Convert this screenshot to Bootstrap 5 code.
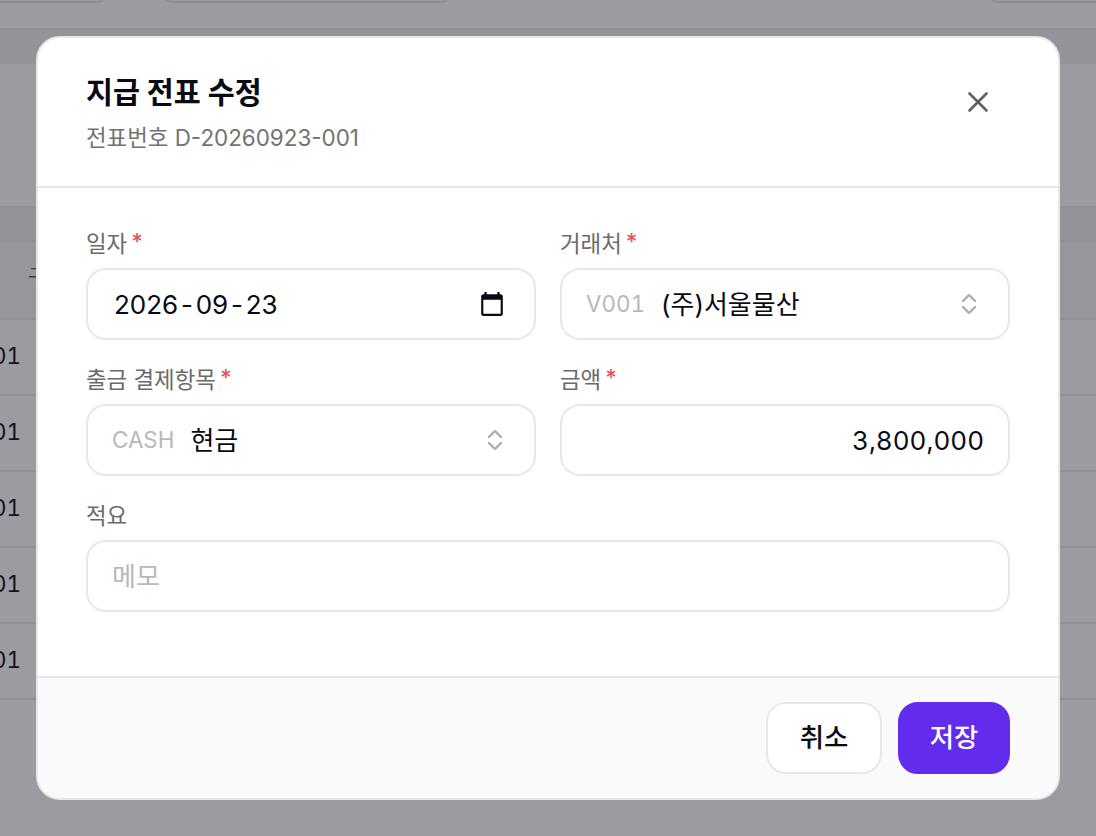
<!DOCTYPE html>
<html lang="ko">
<head>
<meta charset="utf-8">
<title>지급 전표 수정</title>
<link href="https://cdn.jsdelivr.net/npm/bootstrap@5.3.0/dist/css/bootstrap.min.css" rel="stylesheet">
<style>
html,body{height:100%;margin:0;overflow:hidden;}
body{font-family:Inter,"Noto Sans CJK KR",sans-serif;background:#9c9ba1;color:#0a0a14;}
.bg-layer{height:836px;overflow:hidden;display:flex;flex-direction:column;}
.bg-top{height:30px;flex:none;border-bottom:2px solid #908f96;display:flex;}
.bg-pill{height:33px;margin-top:-30px;border:2px solid #8e8d94;border-radius:14px;flex:none;}
.bg-p1{margin-left:-20px;width:130px;}.bg-p2{margin-left:48px;width:296px;}.bg-p3{margin-left:531px;width:140px;}
.bg-band{height:34px;flex:none;background:#94939a;}
.bg-gap{height:142px;flex:none;}
.bg-head{height:36px;flex:none;background:#94939a;border-top:2px solid #908f96;border-bottom:2px solid #908f96;}
.bg-hrow{height:78px;flex:none;background:#97969c;border-bottom:2px solid #908f96;font-size:20px;padding-left:28px;line-height:70px;color:#3c3c44;}
.bg-row{height:76px;flex:none;border-bottom:2px solid #908f96;line-height:72px;font-size:22.4px;color:#14141c;white-space:nowrap;font-variant-numeric:tabular-nums;}
.bg-row span{margin-left:-8px;display:inline-block;}
.dlg.card{position:absolute;left:36px;top:36px;width:1024px;height:764px;background:#fff;border:2px solid #e8e8ec;border-radius:24px;overflow:hidden;}
.dlg .card-header{height:150px;flex:none;background:#fff;border-bottom:2px solid #e8e8ec;border-radius:0;padding:37px 48px 0;}
.dlg-title{font-size:29.3px;font-weight:700;line-height:36px;margin:0;color:#0a0a14;}
.dlg-sub{font-size:22.4px;line-height:32px;margin-top:11px;color:#727272;}
.dlg-x{background:none;border:0;padding:0;width:24px;height:24px;margin:15px 20px 0 0;display:flex;}
.dlg .card-body{padding:40px 48px 0;}
.fld-lab{display:block;font-size:22.4px;line-height:32px;height:32px;margin:0 0 8px;color:#6a6a6a;font-weight:400;}
.fld-req{color:#e0555a;margin-left:4px;vertical-align:2px;font-weight:500;line-height:0;}
.fld-box{height:72px;border:2px solid #e8e8ec;border-radius:20px;background:#fff;margin-bottom:24px;width:100%;font-size:26px;color:#0a0a14;}
.fld-box.form-control{padding:0 24px;font-family:inherit;box-shadow:none;font-variant-numeric:tabular-nums;}
.fld-box.form-control::placeholder{color:#b8b8b8;}
.fld-sel{display:flex;align-items:center;padding:0 31px 0 24px;}
.fld-date{display:flex;align-items:center;padding:0 29px 0 26px;}
.dt-sep{margin:0 2.75px;}
.fld-code{color:#b8b8b8;font-size:22.4px;margin-right:16px;font-variant-numeric:tabular-nums;}
.fld-name{flex:1;}
.dlg .card-footer{height:122px;flex:none;background:#fafafa;border-top:2px solid #e8e8ec;border-radius:0;padding:24px 48px 0;}
.act-btn{height:72px;border-radius:20px;font-size:26.4px;font-weight:500;padding:0;}
.act-cancel{width:116px;background:#fff;border:2px solid #e8e8ec;color:#0a0a14;}
.act-save{width:112px;background:#632ced;border:2px solid #632ced;color:#fff;}
.act-save:hover{background:#632ced;border-color:#632ced;color:#fff;}
</style>
</head>
<body>
<div class="bg-layer">
  <div class="bg-top"><div class="bg-pill bg-p1"></div><div class="bg-pill bg-p2"></div><div class="bg-pill bg-p3"></div></div>
  <div class="bg-band"></div>
  <div class="bg-gap"></div>
  <div class="bg-head"></div>
  <div class="bg-hrow">구</div>
  <div class="bg-row"><span>01</span></div>
  <div class="bg-row"><span>01</span></div>
  <div class="bg-row"><span>01</span></div>
  <div class="bg-row"><span>01</span></div>
  <div class="bg-row"><span>01</span></div>
</div>
<div class="card dlg">
  <div class="card-header d-flex justify-content-between align-items-start">
    <div>
      <h5 class="dlg-title">지급 전표 수정</h5>
      <div class="dlg-sub">전표번호 D-20260923-001</div>
    </div>
    <button class="dlg-x" type="button" aria-label="닫기"><svg width="24" height="24" viewBox="0 0 24 24" fill="none" stroke="#5f5f66" stroke-width="2.6" stroke-linecap="round"><path d="M3.5 3.5 20.5 20.500M20.5 3.5 3.5 20.5"/></svg></button>
  </div>
  <div class="card-body">
    <div class="row gx-4">
      <div class="col-6">
        <label class="fld-lab">일자<span class="fld-req">*</span></label>
        <div class="fld-box fld-date justify-content-between"><span>2026<span class="dt-sep">-</span>09<span class="dt-sep">-</span>23</span>
          <svg width="26" height="26" viewBox="0 0 24 24" fill="#0a0a14"><path d="M20 3h-1V1h-2v2H7V1H5v2H4c-1.100 0-2 .9-2 2v16c0 1.100.9 2 2 2h16c1.100 0 2-.9 2-2V5c0-1.100-.9-2-2-2zm0 18H4V8h16v13z"/></svg></div>
      </div>
      <div class="col-6">
        <label class="fld-lab">거래처<span class="fld-req">*</span></label>
        <div class="fld-box fld-sel"><span class="fld-code">V001</span><span class="fld-name">(주)서울물산</span>
          <svg width="16" height="24" viewBox="0 0 16 24" fill="none" stroke="#adadb1" stroke-width="2.4" stroke-linecap="round" stroke-linejoin="round"><path d="M2 9 8 3l6 6M2 15l6 6 6-6"/></svg></div>
      </div>
      <div class="col-6">
        <label class="fld-lab">출금 결제항목<span class="fld-req">*</span></label>
        <div class="fld-box fld-sel"><span class="fld-code">CASH</span><span class="fld-name">현금</span>
          <svg width="16" height="24" viewBox="0 0 16 24" fill="none" stroke="#adadb1" stroke-width="2.4" stroke-linecap="round" stroke-linejoin="round"><path d="M2 9 8 3l6 6M2 15l6 6 6-6"/></svg></div>
      </div>
      <div class="col-6">
        <label class="fld-lab">금액<span class="fld-req">*</span></label>
        <input class="form-control fld-box text-end" type="text" value="3,800,000">
      </div>
      <div class="col-12">
        <label class="fld-lab">적요</label>
        <input class="form-control fld-box" type="text" placeholder="메모">
      </div>
    </div>
  </div>
  <div class="card-footer d-flex justify-content-end align-items-start gap-3">
    <button class="btn act-btn act-cancel" type="button">취소</button>
    <button class="btn act-btn act-save" type="button">저장</button>
  </div>
</div>
<script src="https://cdn.jsdelivr.net/npm/bootstrap@5.3.0/dist/js/bootstrap.bundle.min.js"></script>
</body>
</html>
